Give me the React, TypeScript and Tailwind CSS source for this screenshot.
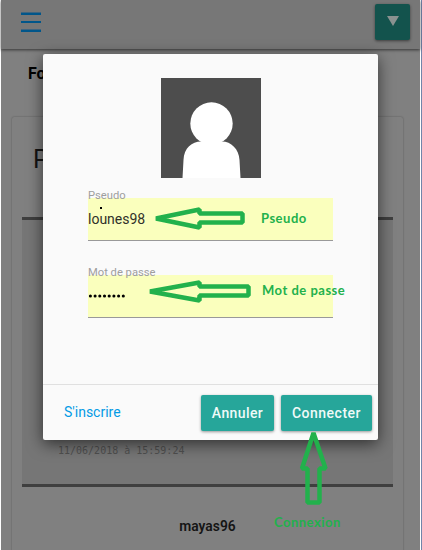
import React from "react";

function Header() {
  return (
    <header className="relative z-10 flex h-[49px] items-start justify-between bg-[#777777] pl-5 pr-2.5 pt-1 shadow-[0_1px_3px_rgba(0,0,0,0.6)]">
      <button className="mt-2 flex h-5 w-5 flex-col justify-between" aria-label="Menu">
        <span className="h-[3px] w-5 border-t border-[#3f6580] bg-[#01568a]" />
        <span className="h-[2px] w-5 bg-[#01568a]" />
        <span className="h-[3px] w-5 border-t border-[#3f6580] bg-[#01568a]" />
      </button>
      <button className="flex h-9 w-[35px] justify-center rounded-[2px] bg-[#13534d] pt-3 shadow-[0_1px_3px_rgba(0,0,0,0.5)]" aria-label="Options">
        <svg width="12" height="10" viewBox="0 0 12 10"><path d="M0 0H12L6 10Z" fill="#8a9290" /></svg>
      </button>
    </header>
  );
}

function Post() {
  return (
    <article className="mr-[17px] ml-[11px] mt-[34px] h-[500px] rounded-[2px] bg-[#808080] px-2.5 pt-[27px] shadow-[0_0_2px_rgba(0,0,0,0.35)]">
      <h2 className="ml-[11px] h-[73px] text-[25px] leading-8 font-normal text-[#141414]">Post</h2>
      <div className="flex h-[270px] flex-col justify-end border-y-[3px] border-[#3f3f3f] bg-[#767676] pb-[25px] pl-9">
        <time className="font-['DejaVu_Sans_Mono',monospace] text-[10px] leading-4 text-[#505050]">11/06/2018 à 15:59:24</time>
      </div>
      <p className="mt-[29px] text-center text-[13.8px] leading-5 font-semibold text-[#151515]">mayas96</p>
    </article>
  );
}

function Field({ label, children }: { label: string; children: React.ReactNode }) {
  return (
    <div className="relative mx-[45px] h-[43px] border-b border-[#999999] bg-[#faffbd]">
      <label className="absolute -top-[8px] left-0 text-[11.2px] leading-3 whitespace-nowrap text-[#9e9e9e]">{label}</label>
      {children}
    </div>
  );
}

function LoginModal() {
  return (
    <section className="absolute top-[54px] left-[43px] z-20 flex h-[386px] w-[335px] flex-col rounded-[2px] bg-[#fafafa] shadow-[0_4px_16px_rgba(0,0,0,0.6)]">
      <div className="h-[330px] pt-6">
        <svg className="ml-[118px] block" width="100" height="100" viewBox="0 0 100 100">
          <path fill="#4d4d4d" d="M0 0H100V100H0Z" />
          <circle cx="50.5" cy="45.5" r="21.2" fill="#fff" />
          <path fill="#fff" d="M21.5 100L22.5 82C23 70 31 63.5 40 63.5H61C70 63.5 78 71 78.5 82L79.5 100Z" />
        </svg>
        <div className="mt-5">
          <Field label="Pseudo">
            <span className="absolute top-[9px] left-[11.5px] h-[1.5px] w-[2px] bg-black" />
            <p className="pt-[11px] text-[14px] leading-5 text-[#30312a]">lounes98</p>
          </Field>
        </div>
        <div className="mt-[34px]">
          <Field label="Mot de passe">
            <svg className="absolute top-[19px] left-0" width="40" height="4" viewBox="0 0 40 4" role="img" aria-label="Mot de passe">
              {Array.from({ length: 8 }, (_, i) => (
                <circle key={i} cx={2.4 + i * 4.7} cy="2" r="1.55" fill="#000" />
              ))}
            </svg>
          </Field>
        </div>
      </div>
      <footer className="flex h-14 items-start border-t border-[#e0e0e0] pt-2.5 pr-1.5 pl-[21px] text-[14px] leading-[35px]">
        <a className="mr-auto text-[#039be5]">S'inscrire</a>
        <button className="mr-[7px] h-9 w-[73px] rounded-[2px] bg-[#26a69a] font-medium tracking-[0.4px] text-[#effaf8] shadow-[0_1px_3px_rgba(0,0,0,0.4)]">Annuler</button>
        <button className="h-9 w-[91px] rounded-[2px] bg-[#26a69a] font-medium tracking-[0.5px] text-[#effaf8] shadow-[0_1px_3px_rgba(0,0,0,0.4)]">Connecter</button>
      </footer>
    </section>
  );
}

function Annotations() {
  return (
    <div className="pointer-events-none absolute inset-0 z-30 font-['Lato',sans-serif] text-[13px] leading-4 font-bold tracking-[0.5px] text-[#22b14c]">
      <svg className="absolute inset-0" width="422" height="550" viewBox="0 0 422 550" fill="none" stroke="#22b14c" strokeWidth="4.5" strokeLinejoin="bevel">
        <path d="M156 218.5L199.5 209.5V213.5H242.5V222.5H199.5V227.5Z" />
        <path d="M150 291.5L199.5 282.5V286.5H248.5V295.5H199.5V300.5Z" />
        <path d="M313.5 433L302 468.5H307.5V502.5H319.5V468.5H325.5Z" />
      </svg>
      <span className="absolute top-[210px] left-[261px]">Pseudo</span>
      <span className="absolute top-[282px] left-[262px] whitespace-nowrap">Mot de passe</span>
      <span className="absolute top-[514px] left-[274px]">Connexion</span>
    </div>
  );
}

export default function App() {
  return (
    <div className="relative h-[550px] w-[422px] overflow-hidden bg-[#7285aa] font-['Roboto',sans-serif]">
      <div className="h-full w-[421px] border-x border-white bg-[#808080]">
        <Header />
        <h1 className="mt-[15px] ml-[27px] h-[19px] text-[16px] leading-[19px] font-bold text-black">Forum</h1>
        <Post />
      </div>
      <LoginModal />
      <Annotations />
    </div>
  );
}
